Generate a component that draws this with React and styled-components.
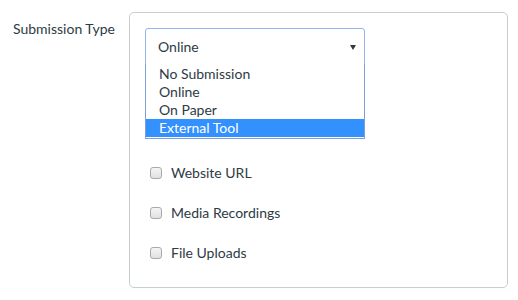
import React from "react";
import styled, { createGlobalStyle } from "styled-components";

const Global = createGlobalStyle`
  html, body { margin: 0; padding: 0; background: #fff; }
  body { font-family: Lato, "Noto Sans", sans-serif; font-size: 14px; color: #2d3b45; }
`;

const Page = styled.div`
  display: flex;
  align-items: flex-start;
  padding-top: 12px;
  width: 518px;
  height: 300px;
  box-sizing: border-box;
`;

const LabelCol = styled.div`
  width: 129px;
  box-sizing: border-box;
  padding: 7px 0 0 13px;
  line-height: 20px;
  color: #2d3b45;
`;

const Panel = styled.div`
  position: relative;
  width: 379px;
  height: 276px;
  box-sizing: border-box;
  border: 1px solid #c7cdd1;
  border-radius: 5px;
  padding: 15px;
  background: #fff;
`;

const SelectBox = styled.div`
  position: relative;
  width: 220px;
  height: 38px;
  box-sizing: border-box;
  border: 1px solid #93b3ee;
  border-radius: 3px;
  border-bottom-left-radius: 0;
  border-bottom-right-radius: 0;
  display: flex;
  align-items: center;
  padding: 0 12px;
  background: #fff;
`;

const SelectValue = styled.span`
  flex: 1;
  line-height: 18px;
`;

const Arrow = styled.span`
  width: 0;
  height: 0;
  border-left: 3px solid transparent;
  border-right: 3px solid transparent;
  border-top: 5px solid #2d3b45;
  margin-right: -4px;
`;

const Dropdown = styled.ul`
  position: absolute;
  left: 15px;
  top: 51px;
  width: 220px;
  box-sizing: border-box;
  margin: 0;
  padding: 1px 0 1px;
  list-style: none;
  background: #fff;
  border: 1px solid #7c9fdb;
  border-top: none;
  z-index: 2;
`;

const Option = styled.li`
  height: 18px;
  line-height: 18px;
  padding-left: 13px;
  background: ${(p) => (p.$active ? "#3390ff" : "transparent")};
  color: ${(p) => (p.$active ? "#fff" : "#2d3b45")};
`;

const CheckList = styled.div`
  margin-top: 87px;
  display: flex;
  flex-direction: column;
`;

const CheckRow = styled.label`
  height: 40px;
  display: flex;
  align-items: center;
  padding-left: 5px;
  gap: 9px;
  line-height: 18px;
`;

const Box = styled.span`
  width: 12px;
  height: 12px;
  box-sizing: border-box;
  border: 1px solid #a9a9a9;
  border-radius: 3px;
  background: linear-gradient(#f4f4f4, #e2e2e2);
`;

const options = ["No Submission", "Online", "On Paper", "External Tool"];
const checks = ["Website URL", "Media Recordings", "File Uploads"];

export default function App() {
  return (
    <>
      <Global />
      <Page>
        <LabelCol>Submission Type</LabelCol>
        <Panel>
          <SelectBox>
            <SelectValue>Online</SelectValue>
            <Arrow />
          </SelectBox>
          <Dropdown>
            {options.map((o) => (
              <Option key={o} $active={o === "External Tool"}>
                {o}
              </Option>
            ))}
          </Dropdown>
          <CheckList>
            {checks.map((c) => (
              <CheckRow key={c}>
                <Box />
                <span>{c}</span>
              </CheckRow>
            ))}
          </CheckList>
        </Panel>
      </Page>
    </>
  );
}
